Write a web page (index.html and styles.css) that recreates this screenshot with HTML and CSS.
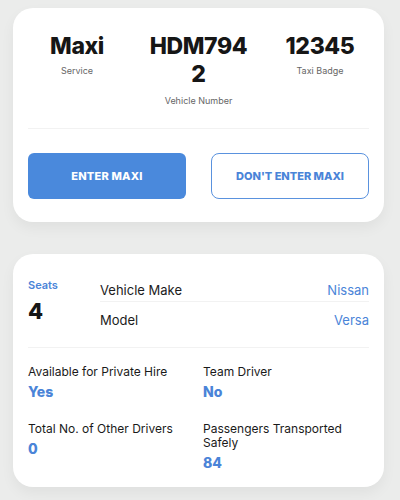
FILE: index.html
```html
<!DOCTYPE html>
<html>
<head>
<meta charset="utf-8">
<link rel="stylesheet" href="styles.css">
</head>
<body>
<div class="page">
  <section class="card card-top">
    <div class="stats">
      <div class="stat">
        <div class="stat-value">Maxi</div>
        <div class="stat-label">Service</div>
      </div>
      <div class="stat stat-mid">
        <div class="stat-value stat-wrap">HDM7942</div>
        <div class="stat-label">Vehicle Number</div>
      </div>
      <div class="stat">
        <div class="stat-value">12345</div>
        <div class="stat-label">Taxi Badge</div>
      </div>
    </div>
    <div class="divider"></div>
    <div class="actions">
      <button class="btn btn-primary">ENTER MAXI</button>
      <button class="btn btn-outline">DON'T ENTER MAXI</button>
    </div>
  </section>

  <section class="card card-info">
    <div class="vehicle">
      <div class="seats">
        <div class="seats-label">Seats</div>
        <div class="seats-value">4</div>
      </div>
      <div class="specs">
        <div class="spec-row spec-first">
          <span class="spec-name">Vehicle Make</span>
          <span class="spec-value">Nissan</span>
        </div>
        <div class="spec-row">
          <span class="spec-name">Model</span>
          <span class="spec-value">Versa</span>
        </div>
      </div>
    </div>
    <div class="divider"></div>
    <div class="facts">
      <div class="fact">
        <div class="fact-label">Available for Private Hire</div>
        <div class="fact-value">Yes</div>
      </div>
      <div class="fact">
        <div class="fact-label">Team Driver</div>
        <div class="fact-value">No</div>
      </div>
      <div class="fact">
        <div class="fact-label">Total No. of Other Drivers</div>
        <div class="fact-value">0</div>
      </div>
      <div class="fact">
        <div class="fact-label">Passengers Transported Safely</div>
        <div class="fact-value">84</div>
      </div>
    </div>
  </section>
</div>
</body>
</html>
```

FILE: styles.css
```css
* { box-sizing: border-box; }
html, body { margin: 0; padding: 0; }
body {
  width: 400px;
  height: 500px;
  background: #ebeceb;
  font-family: "Inter", "Noto Sans", sans-serif;
  color: #1c1c1c;
  overflow: hidden;
}
.page {
  padding: 8px 16px 0 13px;
  display: flex;
  flex-direction: column;
  gap: 32px;
}
.card {
  background: #fff;
  border-radius: 20px;
  box-shadow: 0 6px 14px rgba(0, 0, 0, 0.05);
  padding: 0 15px;
}
.card-top {
  height: 214px;
  padding-top: 24px;
}
.stats {
  display: grid;
  grid-template-columns: 98px 1fr 98px;
  align-items: start;
  height: 96px;
}
.stat {
  display: flex;
  flex-direction: column;
  align-items: center;
  text-align: center;
}
.stat-value {
  font-size: 23px;
  font-weight: 800;
  line-height: 28px;
  letter-spacing: -0.4px;
  color: #161616;
}
.stat-wrap {
  max-width: 100px;
  overflow-wrap: anywhere;
}
.stat-label {
  font-size: 9px;
  color: #666;
  margin-top: 5px;
}
.stat-mid .stat-label { margin-top: 7px; }
.divider {
  height: 1px;
  background: #f2f2f2;
}
.actions {
  display: grid;
  grid-template-columns: 1fr 1fr;
  gap: 25px;
  margin-top: 24px;
}
.btn {
  height: 46px;
  font-family: inherit;
  font-size: 11px;
  font-weight: 800;
  cursor: pointer;
}
.btn-primary {
  background: #4a89dc;
  color: #fff;
  border: none;
  border-radius: 6px;
  letter-spacing: 0.2px;
}
.btn-outline {
  background: #fff;
  color: #4a84d8;
  border: 1px solid #5a92de;
  border-radius: 8px;
}
.card-info {
  height: 233px;
  padding-top: 23px;
}
.vehicle {
  display: flex;
  height: 70px;
}
.seats {
  width: 72px;
}
.seats-label {
  font-size: 11px;
  font-weight: 600;
  color: #4a84d8;
  line-height: 16px;
}
.seats-value {
  font-size: 22px;
  font-weight: 800;
  line-height: 28px;
  margin-top: 4px;
  color: #161616;
}
.specs {
  flex: 1;
  padding-top: 1px;
}
.spec-row {
  display: flex;
  justify-content: space-between;
  align-items: center;
  height: 24px;
  font-size: 13px;
}
.spec-first {
  border-bottom: 1px solid #f2f2f2;
  margin-bottom: 6px;
}
.spec-name { color: #1c1c1c; }
.spec-value { color: #4a84d8; }
.facts {
  display: grid;
  grid-template-columns: 175px 1fr;
  row-gap: 21px;
  padding-top: 17px;
}
.fact-label {
  font-size: 12px;
  line-height: 14px;
  color: #1a1a1a;
}
.fact-value {
  font-size: 14px;
  font-weight: 800;
  color: #4a84d8;
  line-height: 18px;
  margin-top: 4px;
}
```
